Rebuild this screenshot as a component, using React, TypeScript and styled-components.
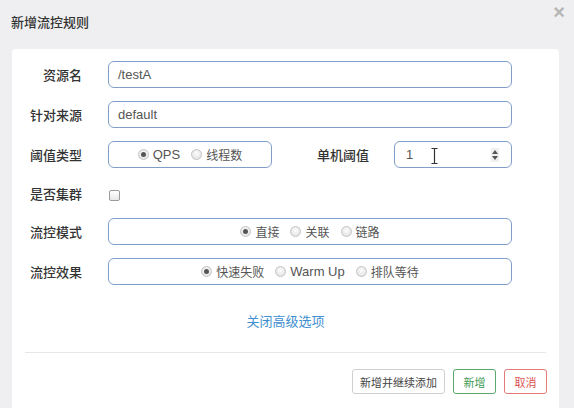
import React from "react";
import styled, { createGlobalStyle } from "styled-components";

const GlobalStyle = createGlobalStyle`
  html, body {
    margin: 0;
    padding: 0;
    background: #efeff1;
    font-family: "Liberation Sans", "Noto Sans CJK SC", sans-serif;
    color: #333;
  }
`;

const Modal = styled.div`
  position: relative;
  width: 574px;
  height: 408px;
  overflow: hidden;
  background: #efeff1;
`;

const Header = styled.div`
  display: flex;
  align-items: center;
  height: 49px;
  padding: 0 0 7px 11px;
  box-sizing: border-box;
`;

const Title = styled.h4`
  margin: 0;
  font-size: 13px;
  font-weight: 500;
  color: #333;
`;

const Close = styled.span`
  position: absolute;
  right: 9px;
  top: 2px;
  font-size: 20px;
  font-weight: bold;
  color: #b5b5b5;
  line-height: 20px;
`;

const Card = styled.div`
  margin-left: 12px;
  width: 547px;
  height: 370px;
  background: #fff;
  border-radius: 4px;
  padding-top: 12px;
  box-sizing: border-box;
`;

const Form = styled.div`
  display: grid;
  grid-template-columns: 70px 404px;
  grid-template-rows: 27px 27px 27px 24px 27px 27px;
  column-gap: 26px;
  row-gap: 13px;
  align-items: center;
`;

const Label = styled.label`
  text-align: right;
  font-size: 13px;
  font-weight: 500;
  color: #333;
  white-space: nowrap;
`;

const Input = styled.div`
  height: 27px;
  box-sizing: border-box;
  border: 1px solid #7f9fc8;
  border-radius: 6px;
  padding-left: 9px;
  display: flex;
  align-items: center;
  font-size: 13px;
  color: #555;
`;

const RadioBox = styled.div<{ $width?: number }>`
  height: 27px;
  width: ${(p) => (p.$width ? `${p.$width}px` : "auto")};
  box-sizing: border-box;
  border: 1px solid #7f9fc8;
  border-radius: 6px;
  display: flex;
  align-items: center;
  justify-content: center;
  gap: 11px;
  font-size: 12px;
  color: #555;
`;

const Option = styled.span`
  display: inline-flex;
  align-items: center;
  gap: 4px;
`;

const Radio = styled.span<{ $checked?: boolean }>`
  position: relative;
  width: 9px;
  height: 9px;
  border-radius: 50%;
  border: 1px solid #c4c4c4;
  background: radial-gradient(circle at 50% 40%, #fdfdfd, #dcdcdc);
  &::after {
    content: "";
    display: ${(p) => (p.$checked ? "block" : "none")};
    position: absolute;
    left: 2px;
    top: 2px;
    width: 5px;
    height: 5px;
    border-radius: 50%;
    background: #555;
  }
`;

const Latin = styled.span`
  font-size: 13px;
`;

const SplitRow = styled.div`
  display: flex;
  align-items: center;
`;

const SubLabel = styled(Label)`
  width: 97px;
  margin-right: 25px;
  box-sizing: border-box;
`;

const NumberInput = styled(Input)`
  position: relative;
  width: 118px;
  padding-left: 11px;
  padding-right: 12px;
  justify-content: space-between;
`;

const Spinner = styled.span`
  display: flex;
  flex-direction: column;
  align-items: center;
  gap: 2px;
  background: #f0f0f0;
  padding: 2px 1px;
`;

const Cursor = styled.svg`
  position: absolute;
  left: 36px;
  top: 6px;
`;

const Checkbox = styled.span`
  width: 9px;
  height: 9px;
  border: 1px solid #9a9a9a;
  border-radius: 2px;
  background: linear-gradient(#fff, #e8e8e8);
  margin-top: 4px;
  margin-left: 1px;
`;

const CheckCell = styled.div`
  display: flex;
  align-items: center;
`;

const Toggle = styled.div`
  margin-top: 28px;
  text-align: center;
  font-size: 13px;
  color: #3e8ed0;
  line-height: 18px;
`;

const Divider = styled.div`
  margin: 21px 13px 0 13px;
  border-top: 1px solid #e6e6e6;
`;

const Footer = styled.div`
  display: flex;
  justify-content: flex-end;
  gap: 8px;
  padding: 16px 12px 0 0;
`;

const Button = styled.button<{ $tone?: "default" | "success" | "danger" }>`
  height: 25px;
  box-sizing: border-box;
  padding: 0;
  white-space: nowrap;
  text-align: center;
  font-family: inherit;
  font-size: 11px;
  background: #fff;
  border-radius: 3px;
  border: 1px solid
    ${(p) => (p.$tone === "success" ? "#59a96c" : p.$tone === "danger" ? "#e07b78" : "#d0d0d0")};
  color: ${(p) => (p.$tone === "success" ? "#3d9a52" : p.$tone === "danger" ? "#d9534f" : "#444")};
  width: ${(p) => (p.$tone === "default" ? "93px" : "43px")};
`;

export default function App() {
  return (
    <Modal>
      <GlobalStyle />
      <Header>
        <Title>新增流控规则</Title>
      </Header>
      <Close>×</Close>
      <Card>
        <Form>
          <Label>资源名</Label>
          <Input>/testA</Input>

          <Label>针对来源</Label>
          <Input>default</Input>

          <Label>阈值类型</Label>
          <SplitRow>
            <RadioBox $width={164}>
              <Option>
                <Radio $checked />
                <Latin>QPS</Latin>
              </Option>
              <Option>
                <Radio />
                线程数
              </Option>
            </RadioBox>
            <SubLabel>单机阈值</SubLabel>
            <NumberInput>
              <span>1</span>
              <Cursor width="7" height="16" viewBox="0 0 7 16">
                <path d="M0.5 0.5h6M3.5 0.5v15M0.5 15.5h6" stroke="#333" strokeWidth="1.2" fill="none" />
              </Cursor>
              <Spinner>
                <svg width="6" height="4" viewBox="0 0 6 4">
                  <path d="M3 0L6 4H0z" fill="#555" />
                </svg>
                <svg width="6" height="4" viewBox="0 0 6 4">
                  <path d="M0 0h6L3 4z" fill="#555" />
                </svg>
              </Spinner>
            </NumberInput>
          </SplitRow>

          <Label>是否集群</Label>
          <CheckCell>
            <Checkbox />
          </CheckCell>

          <Label>流控模式</Label>
          <RadioBox>
            <Option>
              <Radio $checked />
              直接
            </Option>
            <Option>
              <Radio />
              关联
            </Option>
            <Option>
              <Radio />
              链路
            </Option>
          </RadioBox>

          <Label>流控效果</Label>
          <RadioBox>
            <Option>
              <Radio $checked />
              快速失败
            </Option>
            <Option>
              <Radio />
              <Latin>Warm Up</Latin>
            </Option>
            <Option>
              <Radio />
              排队等待
            </Option>
          </RadioBox>
        </Form>
        <Toggle>关闭高级选项</Toggle>
        <Divider />
        <Footer>
          <Button $tone="default">新增并继续添加</Button>
          <Button $tone="success">新增</Button>
          <Button $tone="danger">取消</Button>
        </Footer>
      </Card>
    </Modal>
  );
}
